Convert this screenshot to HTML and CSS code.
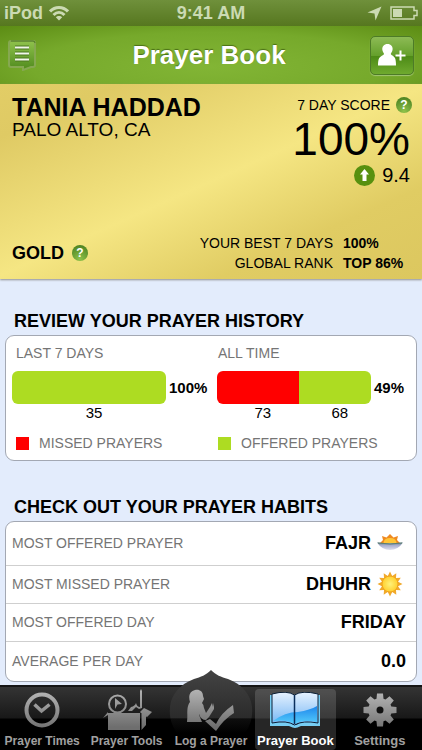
FILE: index.html
```html
<!DOCTYPE html>
<html lang="en">
<head>
    <meta charset="UTF-8">
    <meta name="viewport" content="width=device-width, initial-scale=1.0">
    <title>Prayer Book</title>
    <link rel="stylesheet" href="styles.css">
</head>
<body>
    <div class="status-bar">
        <div class="status-left">
            <span>iPod</span>
            <svg width="20" height="16" viewBox="0 0 20 16" fill="none" stroke="#cbdab3" stroke-width="3">
                <path d="M1 6.5C6 1 14 1 19 6.5"/>
                <path d="M4.5 10C8 6.500 12 6.500 15.500 10"/>
                <path d="M10 15.500L6.800 12.300C8.500 10.600 11.500 10.600 13.200 12.300Z" fill="#cbdab3" stroke="none"/>
            </svg>
        </div>
        <span>9:41 AM</span>
        <div class="status-right">
            <svg width="15" height="15" viewBox="0 0 15 15"><path d="M14.500 0.500L8.500 14.500L7.500 7.500L0.500 6.500Z" fill="#cbdab3"/></svg>
            <svg width="28" height="14" viewBox="0 0 28 14">
                <path d="M1 1H24V4.500H27V9.500H24V13H1Z" fill="none" stroke="#cbdab3" stroke-width="1.500"/>
                <rect x="3" y="3" width="9" height="8" fill="#cbdab3"/>
            </svg>
        </div>
    </div>

    <header class="nav-bar">
        <button type="button" class="menu-btn" aria-label="Menu">
            <svg width="28" height="31" viewBox="0 0 28 31">
                <defs>
                    <linearGradient id="menuFill" x1="0" y1="0" x2="0" y2="1">
                        <stop offset="0" stop-color="#8fc24c"/>
                        <stop offset="1" stop-color="#4f8a1c"/>
                    </linearGradient>
                </defs>
                <path d="M3 1H25Q27 1 27 3V25Q27 27 25 27H23L15 30V27H3Q1 27 1 25V3Q1 1 3 1Z" fill="url(#menuFill)" stroke="#86a851" stroke-width="2"/>
                <path d="M3 1H25Q27 1 27 3" fill="none" stroke="#4b7a1e"/>
                <path d="M7 7.500H21M7 13.500H21M7 19.500H21" stroke="#4a771f" stroke-width="4"/>
                <path d="M7 7.500H21M7 13.500H21M7 19.500H21" stroke="#f2f7ea" stroke-width="2"/>
            </svg>
        </button>
        <h1>Prayer Book</h1>
        <button type="button" class="add-btn" aria-label="Add friend">
            <svg width="30" height="24" viewBox="0 0 30 24" fill="#fff">
                <path d="M10.500 1C14 1 16 3.500 15.600 6.500C15.300 8.600 14.300 9.800 13.700 11C14.500 12.500 17 12.800 18 15C18.800 17 19 19.500 19 22.500H1C1 19.500 1.200 17 2.200 15C3.500 12.800 6.300 12.500 7.100 11C6.500 9.800 5.600 8.600 5.300 6.500C5 3.500 7 1 10.500 1Z"/>
                <path d="M18.500 12.500H28.500M23.500 7.500V17.500" stroke="#fff" stroke-width="2"/>
            </svg>
        </button>
    </header>

    <main>
        <section class="score-card">
            <div class="card-row">
                <div>
                    <h2 class="user-name">TANIA HADDAD</h2>
                    <p class="user-city">PALO ALTO, CA</p>
                </div>
                <div class="score">
                    <div class="score-label">7 DAY SCORE <button type="button" class="help-btn">?</button></div>
                    <div class="score-value">100%</div>
                    <div class="score-change">
                        <svg width="21" height="21" viewBox="0 0 21 21">
                            <circle cx="10.500" cy="10.500" r="10.500" fill="#57900f"/>
                            <path d="M10.500 4L15 9.500H12.500V16H8.500V9.500H6Z" fill="#fff"/>
                        </svg>
                        <span>9.4</span>
                    </div>
                </div>
            </div>
            <div class="card-row card-bottom">
                <div class="level">GOLD <button type="button" class="help-btn">?</button></div>
                <table class="stats">
                    <tr><th scope="row">YOUR BEST 7 DAYS</th><td>100%</td></tr>
                    <tr><th scope="row">GLOBAL RANK</th><td>TOP 86%</td></tr>
                </table>
            </div>
        </section>

        <section class="history">
            <h2 class="section-title">REVIEW YOUR PRAYER HISTORY</h2>
            <div class="panel history-panel">
                <div class="history-col">
                    <h3>LAST 7 DAYS</h3>
                    <div class="chart">
                        <div class="bar">
                            <div class="offered" style="width: 100%"></div>
                        </div>
                        <strong>100%</strong>
                        <div class="counts">
                            <span style="width: 100%">35</span>
                        </div>
                    </div>
                    <p class="legend"><i class="missed"></i>MISSED PRAYERS</p>
                </div>
                <div class="history-col">
                    <h3>ALL TIME</h3>
                    <div class="chart">
                        <div class="bar">
                            <div class="missed" style="width: 53%"></div>
                            <div class="offered" style="width: 47%"></div>
                        </div>
                        <strong>49%</strong>
                        <div class="counts">
                            <span style="width: 53%">73</span>
                            <span style="width: 47%">68</span>
                        </div>
                    </div>
                    <p class="legend"><i class="offered"></i>OFFERED PRAYERS</p>
                </div>
            </div>
        </section>

        <section class="habits">
            <h2 class="section-title">CHECK OUT YOUR PRAYER HABITS</h2>
            <div class="panel">
                <table class="habits-table">
                    <tr>
                        <th scope="row">MOST OFFERED PRAYER</th>
                        <td>
                            <div class="with-icon">FAJR
                                <svg width="26" height="26" viewBox="0 0 26 26">
                                    <defs>
                                        <linearGradient id="water" x1="0" y1="0" x2="0" y2="1">
                                            <stop offset="0" stop-color="#667f8c"/>
                                            <stop offset="0.400" stop-color="#a9afd0"/>
                                            <stop offset="1" stop-color="#dfe0ee"/>
                                        </linearGradient>
                                    </defs>
                                    <path d="M3 13L6 10L5 6L9.500 7.500L13 4L16.500 7.500L21 6L20 10L23 13Z" fill="#ef8a20"/>
                                    <path d="M6.500 13Q7 8 13 8Q19 8 19.500 13Z" fill="#ffc637"/>
                                    <path d="M0 12.500Q13 14 26 12.500Q21 20 13 20Q5 20 0 12.500Z" fill="url(#water)"/>
                                    <path d="M1 13Q13 15 25 13" fill="none" stroke="#5d7f70"/>
                                </svg>
                            </div>
                        </td>
                    </tr>
                    <tr>
                        <th scope="row">MOST MISSED PRAYER</th>
                        <td>
                            <div class="with-icon">DHUHR
                                <svg width="26" height="26" viewBox="0 0 26 26">
                                    <defs>
                                        <radialGradient id="sun">
                                            <stop offset="0" stop-color="#fff27a"/>
                                            <stop offset="1" stop-color="#ffcf2e"/>
                                        </radialGradient>
                                    </defs>
                                    <path d="M13 0.500L15.200 5L19.300 2.200L19 7L23.800 6.700L21 10.800L25.500 13L21 15.200L23.800 19.300L19 19L19.300 23.800L15.200 21L13 25.500L10.800 21L6.700 23.800L7 19L2.200 19.300L5 15.200L0.500 13L5 10.800L2.200 6.700L7 7L6.700 2.200L10.800 5Z" fill="#f0a92c"/>
                                    <circle cx="13" cy="13" r="8" fill="url(#sun)" stroke="#f2a51f"/>
                                </svg>
                            </div>
                        </td>
                    </tr>
                    <tr><th scope="row">MOST OFFERED DAY</th><td>FRIDAY</td></tr>
                    <tr><th scope="row">AVERAGE PER DAY</th><td>0.0</td></tr>
                </table>
            </div>
        </section>
    </main>

    <nav class="tab-bar">
        <svg class="arch" width="88" height="64" viewBox="0 0 88 64">
            <defs>
                <linearGradient id="archFill" gradientUnits="userSpaceOnUse" x1="0" y1="0" x2="0" y2="64">
                    <stop offset="0" stop-color="#444"/>
                    <stop offset="0.760" stop-color="#2b2b2b"/>
                    <stop offset="0.780" stop-color="#0e0e0e"/>
                    <stop offset="1" stop-color="#000"/>
                </linearGradient>
            </defs>
            <path d="M44 1C49 6 54 8 61 10C75 15 84 26 85 38C86 49 83 57 78 64H10C5 57 2 49 3 38C4 26 13 15 27 10C34 8 39 6 44 1Z" fill="url(#archFill)"/>
        </svg>
        <a href="#" class="tab">
            <svg width="36" height="36" viewBox="0 0 36 36" fill="none" stroke="url(#grey)">
                <defs>
                    <linearGradient id="grey" gradientUnits="userSpaceOnUse" x1="0" y1="0" x2="0" y2="38">
                        <stop offset="0" stop-color="#b4b4b4"/>
                        <stop offset="1" stop-color="#6e6e6e"/>
                    </linearGradient>
                </defs>
                <circle cx="18" cy="18" r="15.500" stroke-width="4"/>
                <path d="M10.500 12.500L17.500 19L25.500 12.500" stroke-width="3.500"/>
            </svg>
            <span>Prayer Times</span>
        </a>
        <a href="#" class="tab">
            <svg width="50" height="42" viewBox="0 0 50 42" fill="url(#grey)">
                <path d="M6 24V41H38V24ZM39.500 25V41L44 36V25Z"/>
                <path d="M38 23L42 19L50 23L45 28L40 25ZM1 29L6 23V26Z"/>
                <circle cx="15.500" cy="15" r="8.500" fill="none" stroke="url(#grey)" stroke-width="2"/>
                <path d="M13 9L20 15L15.500 15.500L13 20Z"/>
                <path d="M26 22L29 18Q33 17 34 14Q35 18 38 18V2L39 0L40 2V19L37 20L34 18L30 22Z"/>
            </svg>
            <span>Prayer Tools</span>
        </a>
        <a href="#" class="tab">
            <svg width="48" height="42" viewBox="0 0 48 42" fill="url(#grey)">
                <path d="M8 1C12 0 16 2 16 7L17 10L15 14Q17 16 17 19L19 24L23 18L25 14L26 18L27 14L27 20L22 28L19 31Q14 31 12 25L12 26L15 33H0C1 26 -1 18 3 13C1 7 3 2 8 1Z"/>
                <path d="M18 32L23 30L29 35Q34 24 46 16L47 24Q37 30 29 42Z"/>
            </svg>
            <span>Log a Prayer</span>
        </a>
        <a href="#" class="tab active">
            <svg width="50" height="36" viewBox="0 0 50 36">
                <defs>
                    <linearGradient id="page" x1="0" y1="0" x2="0" y2="1">
                        <stop offset="0" stop-color="#e6f2ff"/>
                        <stop offset="1" stop-color="#72b4f4"/>
                    </linearGradient>
                    <linearGradient id="pageLow" x1="0" y1="0" x2="0" y2="1">
                        <stop offset="0" stop-color="#1e86ec"/>
                        <stop offset="1" stop-color="#55cdfb"/>
                    </linearGradient>
                </defs>
                <path d="M0 3H3V30Q16 28 22 32Q25 34 28 32Q34 28 47 30V3H50V34H31Q27 36 25 36Q23 36 19 34H0Z" fill="#76cdf3"/>
                <path d="M2 2Q17 -2 24.500 3Q32 -2 48 2V31Q33 28 24.500 33Q17 28 2 31Z" fill="url(#page)" stroke="#0b1f36"/>
                <path d="M3 29Q15 20 28 20Q40 18 47 14V30Q33 27 24.500 32Q17 27 3 29Z" fill="url(#pageLow)"/>
                <path d="M24.500 3V32" stroke="#0b2f5c" stroke-width="1.500"/>
            </svg>
            <span>Prayer Book</span>
        </a>
        <a href="#" class="tab">
            <svg width="34" height="34" viewBox="0 0 34 34">
                <path d="M13.500 5.700L14 0.500H20L20.500 5.700L22.500 6.500L26.500 3.200L30.800 7.500L27.500 11.500L28.300 13.500L33.500 14V20L28.300 20.500L27.500 22.500L30.800 26.500L26.500 30.800L22.500 27.500L20.500 28.300L20 33.500H14L13.500 28.300L11.500 27.500L7.500 30.800L3.200 26.500L6.500 22.500L5.700 20.500L0.500 20V14L5.700 13.500L6.500 11.500L3.200 7.500L7.500 3.200L11.500 6.500Z" fill="url(#grey)"/>
                <circle cx="17" cy="17" r="3.500" fill="#111"/>
            </svg>
            <span>Settings</span>
        </a>
    </nav>
</body>
</html>
```
FILE: styles.css
```css
/* General Styles */
* {
    box-sizing: border-box;
}

body {
    font-family: "Liberation Sans", Arial, sans-serif;
    background-color: #e3ecfc;
    color: #000;
    display: flex;
    flex-direction: column;
    min-height: 100vh;
    margin: 0;
}

h1, h2, h3, p {
    margin: 0;
}

svg {
    display: block;
    flex: none;
}

button {
    border: none;
    padding: 0;
    background: none;
    font-family: inherit;
    cursor: pointer;
}

table {
    border-collapse: collapse;
}

/* Status bar */
.status-bar {
    display: grid;
    grid-template-columns: 1fr auto 1fr;
    align-items: center;
    height: 26px;
    padding: 0 4px;
    background: linear-gradient(#6f903b, #56771f);
    color: #cbdab3;
    font-size: 18px;
    font-weight: bold;
}

.status-left,
.status-right {
    display: flex;
    align-items: center;
    gap: 6px;
}

.status-right {
    justify-content: flex-end;
    gap: 8px;
}

/* Nav bar */
.nav-bar {
    display: flex;
    justify-content: space-between;
    align-items: center;
    height: 58px;
    padding: 0 8px;
    background: radial-gradient(ellipse at 50% 70%, #82b535 0%, #76a92b 60%, #5c8c14 100%);
}

.nav-bar h1 {
    color: #fff;
    font-size: 26px;
    line-height: 32px;
    text-shadow: 0 -1px 1px #4a6f17;
}

.menu-btn {
    width: 40px;
}

.add-btn {
    display: flex;
    justify-content: center;
    align-items: center;
    width: 44px;
    height: 39px;
    border: 1px solid #4d7b27;
    border-radius: 5px;
    background: linear-gradient(#8dbb55, #65a02c 50%, #4c8a16 51%, #6faa2f);
    box-shadow: 0 1px 1px #a2c574;
}

/* Score card */
.score-card {
    padding: 11px 10px 6px 12px;
    background: linear-gradient(156deg, #e2cd66 0%, #dfca64 14%, #f5e683 50%, #e0cc63 76%, #dcc75f 100%);
    box-shadow: 0 1px 2px #8f8f8f;
}

.card-row {
    display: flex;
    justify-content: space-between;
}

.card-bottom {
    align-items: center;
    margin-top: 46px;
}

.user-name {
    font-size: 25px;
    line-height: 24px;
}

.user-city {
    font-size: 19px;
    line-height: 22px;
}

.score {
    display: flex;
    flex-direction: column;
    align-items: flex-end;
}

.score-label,
.level {
    display: flex;
    align-items: center;
    gap: 6px;
    font-size: 14px;
    line-height: 20px;
}

.level {
    font-size: 18px;
    font-weight: bold;
    gap: 8px;
}

.help-btn {
    width: 16px;
    height: 16px;
    border-radius: 50%;
    background: radial-gradient(circle at 50% 90%, #8fc24a, #437a1c);
    color: #fff;
    font-size: 12px;
    font-weight: bold;
    line-height: 16px;
}

.score-value {
    margin-right: 2px;
    font-size: 46px;
    line-height: 48px;
}

.score-change {
    display: flex;
    align-items: center;
    gap: 7px;
    margin-right: 2px;
    font-size: 20px;
    line-height: 24px;
}

.stats {
    font-size: 14px;
    line-height: 20px;
}

.stats th {
    padding: 0 10px 0 0;
    font-weight: normal;
    text-align: right;
}

.stats td {
    width: 69px;
    padding: 0;
    font-weight: bold;
}

/* Sections */
.history {
    padding: 30px 5px 0;
}

.habits {
    padding: 34px 5px 3px;
}

.section-title {
    margin: 0 0 2px 9px;
    font-size: 18px;
    line-height: 24px;
}

.panel {
    overflow: hidden;
    border: 1px solid #a3a8b3;
    border-radius: 9px;
    background: #fff;
}

/* Prayer history */
.history-panel {
    display: grid;
    grid-template-columns: 1fr 1fr;
    padding: 7px 0;
}

.history-col {
    padding-left: 6px;
}

.history-col h3 {
    margin: 0 0 8px 4px;
    color: #757575;
    font-size: 14px;
    font-weight: normal;
    line-height: 20px;
}

.chart {
    display: grid;
    grid-template-columns: 1fr 45px;
    align-items: center;
}

.chart strong {
    padding-left: 3px;
    font-size: 15px;
}

.bar {
    display: flex;
    overflow: hidden;
    height: 33px;
    border-radius: 6px;
}

.offered {
    background: #addc22;
}

.missed {
    background: #f00;
}

.counts {
    display: flex;
    font-size: 15px;
    line-height: 18px;
    text-align: center;
}

.counts span {
    padding-left: 10px;
}

.legend {
    display: flex;
    align-items: center;
    gap: 10px;
    margin: 11px 0 0 4px;
    color: #757575;
    font-size: 14px;
    line-height: 20px;
}

.legend i {
    width: 13px;
    height: 13px;
}

.history-col:last-child .legend,
.history-col:last-child h3 {
    margin-left: 1px;
}

/* Prayer habits */
.habits-table {
    width: 100%;
}

.habits-table tr {
    height: 38px;
    border-bottom: 1px solid #cfcfcf;
}

.habits-table tr:first-child {
    height: 43px;
}

.habits-table tr:last-child {
    height: 40px;
    border-bottom: none;
}

.habits-table th {
    padding: 0 0 0 6px;
    color: #757575;
    font-size: 14px;
    font-weight: normal;
    text-align: left;
}

.habits-table td {
    padding: 0 10px 0 0;
    font-size: 18px;
    font-weight: bold;
    text-align: right;
}

.with-icon {
    display: flex;
    justify-content: flex-end;
    align-items: center;
    gap: 6px;
    padding-right: 3px;
}

/* Tab bar */
.tab-bar {
    position: relative;
    display: grid;
    grid-template-columns: repeat(5, 1fr);
    height: 65px;
    margin-top: auto;
    border-top: 2px solid #151515;
    background: linear-gradient(#343434, #181818 31px, #000 32px);
}

.arch {
    position: absolute;
    left: 50%;
    bottom: 17px;
    transform: translateX(-50%);
}

.tab {
    position: relative;
    display: flex;
    flex-direction: column;
    align-items: center;
    justify-content: flex-end;
    gap: 3px;
    margin: 2px 2px 3px;
    padding-bottom: 2px;
    color: #a0a0a0;
    font-size: 12px;
    font-weight: bold;
    line-height: 14px;
    text-decoration: none;
    white-space: nowrap;
}

.tab svg {
    margin: auto;
}

.tab.active {
    border-radius: 4px;
    background: rgba(255, 255, 255, 0.15);
    color: #fff;
}

.tab.active,
.tab:last-child {
    font-size: 13px;
}
```
